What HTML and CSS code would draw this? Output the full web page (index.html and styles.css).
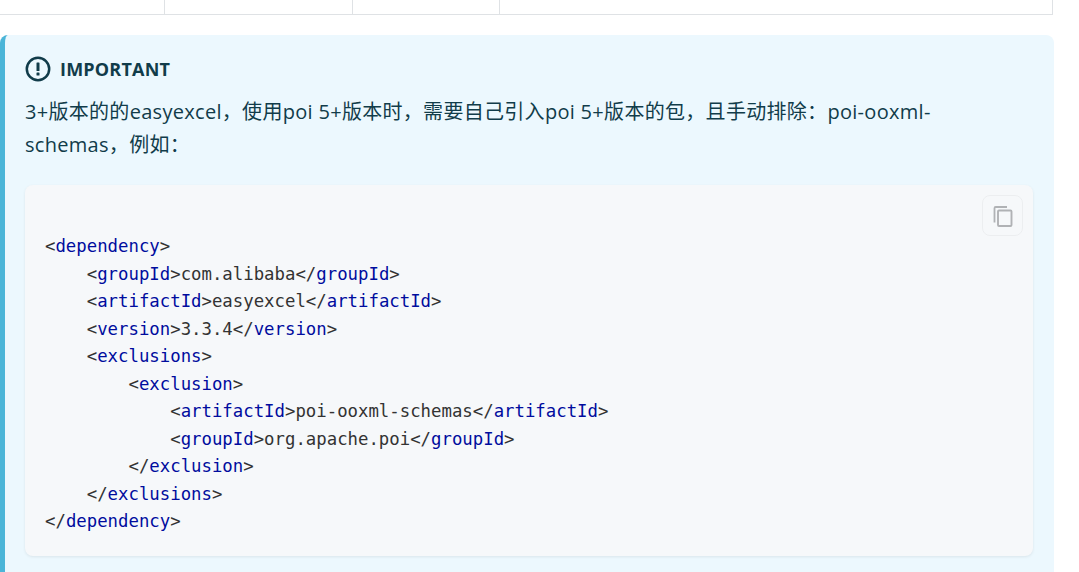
FILE: index.html
```html
<!DOCTYPE html>
<html lang="zh">
<head>
<meta charset="utf-8">
<title>IMPORTANT</title>
<link rel="stylesheet" href="styles.css">
</head>
<body>
<div class="table-row">
  <div class="cell c1"></div>
  <div class="cell c2"></div>
  <div class="cell c3"></div>
  <div class="cell c4"></div>
</div>
<section class="callout">
  <div class="callout-title">
    <svg class="alert-icon" viewBox="0 0 26 26" width="26" height="26" aria-hidden="true">
      <circle cx="13" cy="13" r="11.2" fill="none" stroke="#113c4a" stroke-width="2.5"/>
      <rect x="11.5" y="6.5" width="3" height="8.5" rx="0.6" fill="#113c4a"/>
      <rect x="11.5" y="16.5" width="3" height="3" rx="0.6" fill="#113c4a"/>
    </svg>
    <span>IMPORTANT</span>
  </div>
  <p class="callout-text">3+版本的的easyexcel，使用poi 5+版本时，需要自己引入poi 5+版本的包，且手动排除：poi-ooxml-schemas，例如：</p>
  <div class="code-block">
    <button class="copy" type="button" aria-label="copy">
      <svg viewBox="0 0 20 22" width="20" height="22" aria-hidden="true">
        <path d="M1.5 17.5V3.2C1.5 2.5 2 2 2.7 2H14" fill="none" stroke="#b0b2b5" stroke-width="1.8"/>
        <rect x="5" y="5.5" width="13.5" height="15.5" rx="1" fill="none" stroke="#b0b2b5" stroke-width="1.9"/>
      </svg>
    </button>
<pre class="code"><code class="code-inner"><span class="p">&lt;</span><span class="t">dependency</span><span class="p">&gt;</span>
    <span class="p">&lt;</span><span class="t">groupId</span><span class="p">&gt;</span>com.alibaba<span class="p">&lt;/</span><span class="t">groupId</span><span class="p">&gt;</span>
    <span class="p">&lt;</span><span class="t">artifactId</span><span class="p">&gt;</span>easyexcel<span class="p">&lt;/</span><span class="t">artifactId</span><span class="p">&gt;</span>
    <span class="p">&lt;</span><span class="t">version</span><span class="p">&gt;</span>3.3.4<span class="p">&lt;/</span><span class="t">version</span><span class="p">&gt;</span>
    <span class="p">&lt;</span><span class="t">exclusions</span><span class="p">&gt;</span>
        <span class="p">&lt;</span><span class="t">exclusion</span><span class="p">&gt;</span>
            <span class="p">&lt;</span><span class="t">artifactId</span><span class="p">&gt;</span>poi-ooxml-schemas<span class="p">&lt;/</span><span class="t">artifactId</span><span class="p">&gt;</span>
            <span class="p">&lt;</span><span class="t">groupId</span><span class="p">&gt;</span>org.apache.poi<span class="p">&lt;/</span><span class="t">groupId</span><span class="p">&gt;</span>
        <span class="p">&lt;/</span><span class="t">exclusion</span><span class="p">&gt;</span>
    <span class="p">&lt;/</span><span class="t">exclusions</span><span class="p">&gt;</span>
<span class="p">&lt;/</span><span class="t">dependency</span><span class="p">&gt;</span></code></pre>
  </div>
</section>
</body>
</html>
```
FILE: styles.css
```css
* { box-sizing: border-box; }
html, body { margin: 0; padding: 0; background: #fff; }
body {
  height: 572px;
  overflow: hidden;
  font-family: "Open Sans", "Noto Sans CJK SC", sans-serif;
  color: #113c4a;
}
.table-row {
  display: flex;
  width: 1053px;
  height: 15px;
  border-bottom: 1px solid #dfe2e5;
  border-right: 1px solid #dfe2e5;
}
.cell { height: 14px; border-right: 1px solid #dfe2e5; }
.c1 { width: 165px; }
.c2 { width: 188px; }
.c3 { width: 147px; }
.c4 { flex: 1; border-right: 0; }
.callout {
  width: 1054px;
  height: 537px;
  overflow: hidden;
  margin-top: 20px;
  padding: 20px 21px 0 20px;
  background: #ecf8fe;
  border-left: 5px solid #4bb5d8;
  border-radius: 8px 8px 0 0;
}
.callout-title {
  display: flex;
  align-items: center;
  gap: 9px;
  height: 28px;
  font-size: 18px;
  font-weight: 700;
  letter-spacing: .2px;
}
.alert-icon { flex: none; }
.callout-text {
  max-width: 990px;
  margin: 12px 0 0;
  font-size: 20px;
  line-height: 33px;
  letter-spacing: .3px;
  color: #113c4a;
}
.code-block {
  position: relative;
  margin-top: 24px;
  height: 371px;
  padding: 48px 20px 0;
  background: #f6f8fa;
  border-radius: 8px;
  box-shadow: 0 1px 3px rgba(0, 0, 0, .08);
}
.copy {
  position: absolute;
  top: 10px;
  right: 10px;
  width: 41px;
  height: 41px;
  display: flex;
  align-items: center;
  justify-content: center;
  padding: 0;
  background: transparent;
  border: 1px solid #eceef0;
  border-radius: 8px;
}
.code {
  margin: 0;
  font-family: "DejaVu Sans Mono", monospace;
  font-size: 17.33px;
  line-height: 27.5px;
  color: #333;
}
.code-inner { font-family: inherit; font-size: inherit; }
.p { color: #333; }
.t { color: #000c9e; }
```
